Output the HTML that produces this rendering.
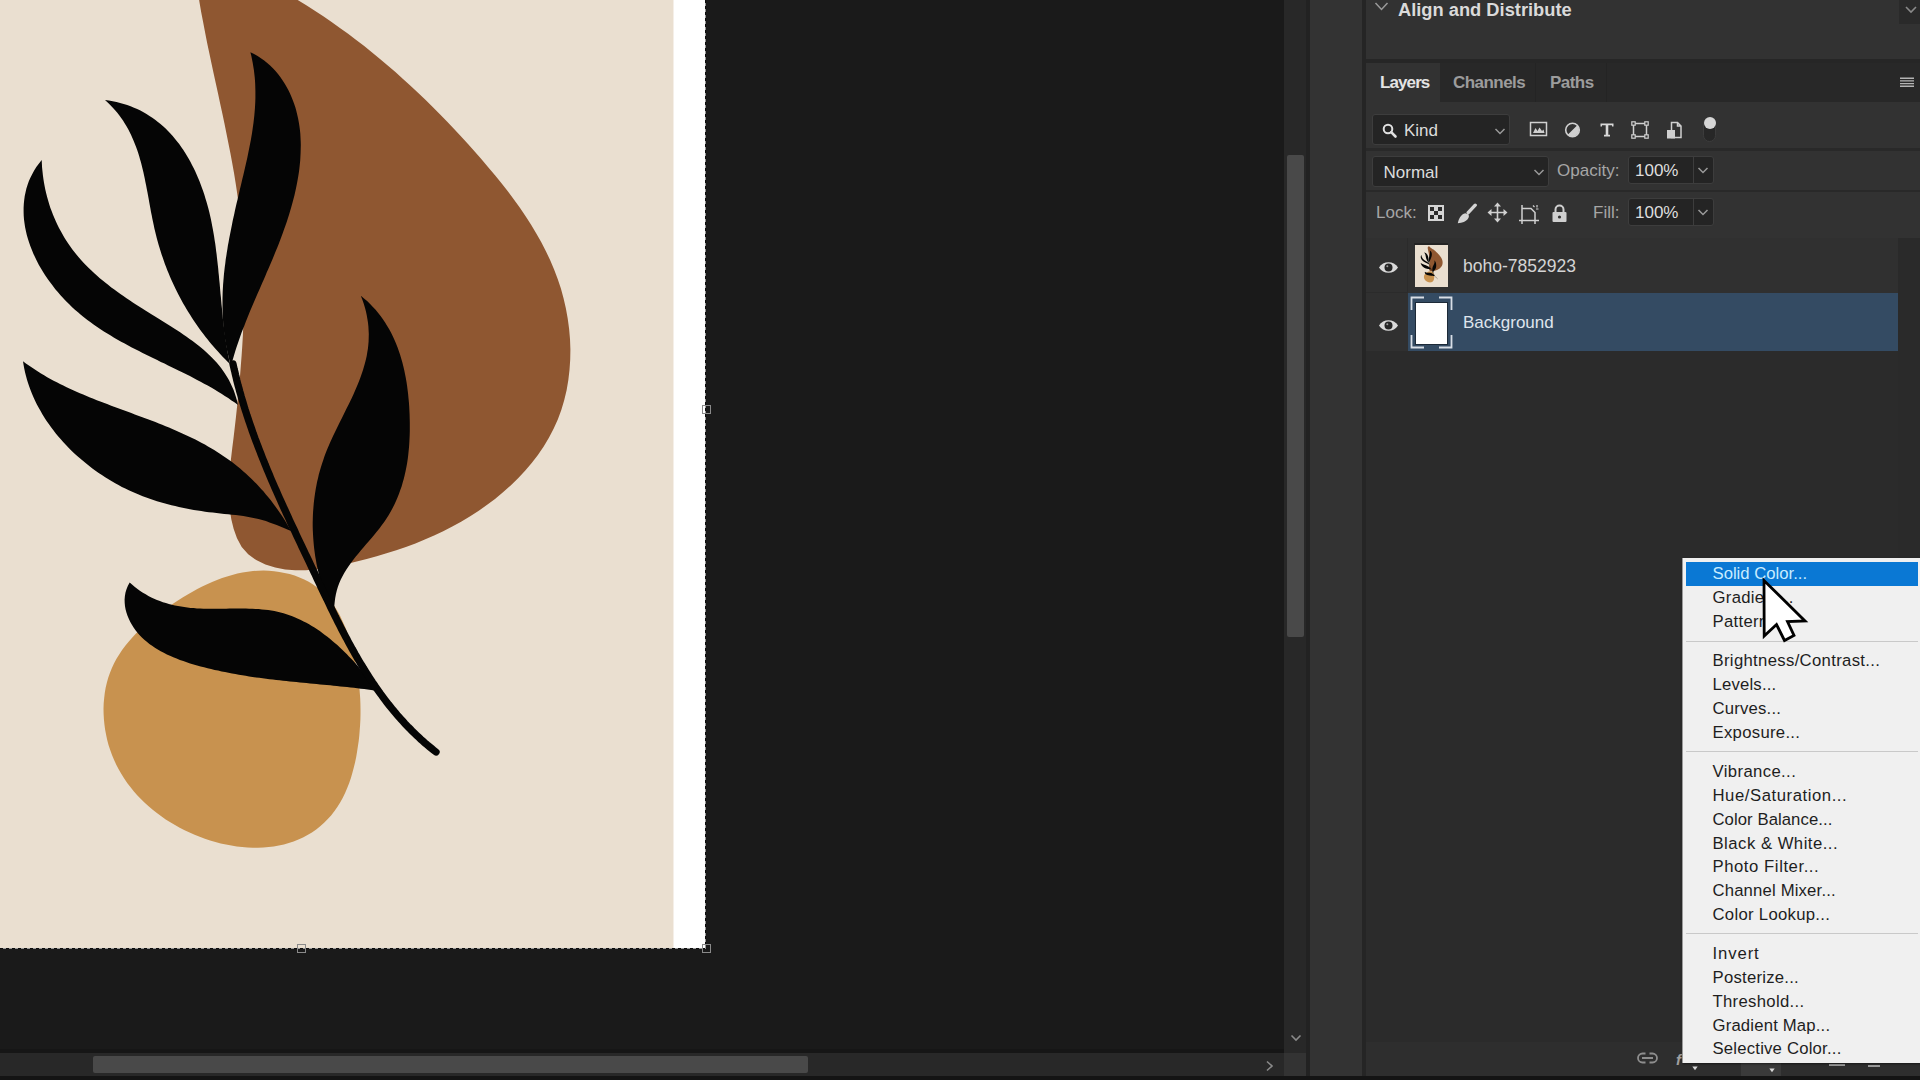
<!DOCTYPE html>
<html>
<head>
<meta charset="utf-8">
<style>
html,body{margin:0;padding:0;}
body{width:1920px;height:1080px;overflow:hidden;background:#1a1a1a;position:relative;font-family:"Liberation Sans",sans-serif;}
.abs{position:absolute;}
.t{position:absolute;white-space:nowrap;line-height:1;}
</style>
</head>
<body>
<!-- canvas area -->
<svg width="706" height="948" viewBox="0 0 706 948" style="position:absolute;left:0;top:0">
<rect x="0" y="0" width="674" height="948" fill="#EADFD0"/>
<rect x="673.5" y="0" width="31.5" height="948" fill="#FFFFFF"/>
<g id="artg"><path d="M297.7,0.1 L306.3,5.3 L314.8,10.8 L323.3,16.3 L331.6,22.0 L339.9,27.9 L348.1,33.8 L356.2,39.9 L364.2,46.1 L372.1,52.5 L380.0,58.9 L387.7,65.5 L395.4,72.1 L403.0,78.9 L410.5,85.8 L418.0,92.7 L425.4,99.8 L432.7,107.0 L439.9,114.3 L447.0,121.6 L454.1,129.0 L461.1,136.5 L468.0,144.1 L474.9,151.8 L481.7,159.5 L488.4,167.4 L495.0,175.3 L501.5,183.2 L507.8,191.3 L513.9,199.5 L519.9,207.8 L525.6,216.2 L531.1,224.8 L536.3,233.4 L541.3,242.2 L545.9,251.2 L550.2,260.3 L554.1,269.6 L557.7,279.0 L560.9,288.6 L563.6,298.4 L565.9,308.4 L567.7,318.5 L569.1,328.7 L570.0,339.0 L570.4,349.4 L570.2,359.7 L569.5,370.0 L568.3,380.2 L566.6,390.3 L564.2,400.3 L561.3,410.0 L557.8,419.6 L553.6,428.8 L548.9,437.8 L543.7,446.5 L537.9,454.9 L531.7,463.0 L525.1,470.8 L518.1,478.3 L510.7,485.4 L503.0,492.3 L495.0,498.9 L486.8,505.1 L478.4,511.0 L469.8,516.5 L461.1,521.7 L452.3,526.6 L443.2,531.2 L434.1,535.5 L424.8,539.6 L415.4,543.4 L405.9,546.9 L396.3,550.2 L386.5,553.3 L376.7,556.2 L366.7,559.0 L356.7,561.5 L346.6,563.9 L336.3,566.1 L326.1,568.0 L315.8,569.4 L305.5,570.2 L295.3,570.2 L285.2,569.4 L275.2,567.5 L265.4,564.5 L256.2,560.1 L248.2,554.3 L241.7,547.0 L237.0,538.3 L233.7,528.9 L231.3,519.2 L229.8,509.4 L229.1,499.5 L228.9,489.4 L229.3,479.3 L230.0,469.1 L231.0,458.8 L232.2,448.6 L233.5,438.2 L234.7,427.9 L235.9,417.6 L237.0,407.3 L238.0,397.0 L239.0,386.7 L240.0,376.3 L240.8,366.0 L241.6,355.8 L242.3,345.5 L242.9,335.2 L243.3,324.9 L243.7,314.7 L244.0,304.5 L244.1,294.3 L244.1,284.1 L243.9,273.9 L243.7,263.8 L243.2,253.6 L242.6,243.5 L241.9,233.5 L241.0,223.4 L239.9,213.4 L238.6,203.4 L237.2,193.5 L235.7,183.5 L234.1,173.5 L232.3,163.6 L230.5,153.7 L228.5,143.7 L226.5,133.8 L224.5,123.8 L222.4,113.8 L220.2,103.8 L218.1,93.8 L215.9,83.7 L213.7,73.7 L211.5,63.5 L209.4,53.4 L207.2,43.2 L205.2,32.9 L203.2,22.6 L201.2,12.2 L199.4,1.8 L198.0,-8.6 L197.9,-18.9 L199.4,-29.0 L203.1,-38.4 L208.6,-46.2 L215.5,-51.3 L223.6,-52.9 L232.2,-51.2 L240.8,-46.7 L248.9,-40.2 L256.6,-32.4 L264.2,-24.3 L272.1,-16.9 L280.4,-10.7 L289.0,-5.2 L297.7,0.1Z" fill="#8F5731"/>
<path d="M173.7,603.3 L178.3,600.3 L183.0,597.3 L187.7,594.5 L192.5,591.7 L197.3,589.1 L202.2,586.6 L207.1,584.2 L212.1,582.0 L217.0,580.0 L222.1,578.1 L227.1,576.4 L232.2,574.9 L237.4,573.6 L242.5,572.5 L247.7,571.7 L253.0,571.1 L258.2,570.7 L263.5,570.6 L268.8,570.8 L274.1,571.2 L279.3,571.9 L284.5,572.9 L289.6,574.1 L294.6,575.6 L299.5,577.4 L304.2,579.5 L308.7,581.8 L313.1,584.5 L317.2,587.4 L321.1,590.6 L324.8,594.1 L328.2,597.9 L331.4,601.9 L334.4,606.1 L337.1,610.5 L339.7,615.1 L342.0,619.9 L344.2,624.8 L346.3,629.8 L348.1,634.9 L349.8,640.1 L351.4,645.4 L352.8,650.6 L354.1,655.9 L355.3,661.2 L356.3,666.5 L357.3,671.8 L358.1,677.0 L358.8,682.3 L359.4,687.7 L359.8,693.0 L360.2,698.3 L360.4,703.6 L360.5,708.9 L360.5,714.2 L360.4,719.6 L360.1,724.9 L359.7,730.2 L359.3,735.6 L358.7,740.9 L357.9,746.3 L357.1,751.6 L356.2,757.0 L355.1,762.3 L353.8,767.6 L352.4,772.8 L350.9,778.0 L349.2,783.1 L347.2,788.1 L345.1,793.0 L342.8,797.7 L340.3,802.3 L337.5,806.8 L334.5,811.1 L331.3,815.2 L327.8,819.1 L324.1,822.8 L320.2,826.2 L316.2,829.4 L311.9,832.4 L307.5,835.1 L303.0,837.5 L298.4,839.6 L293.6,841.5 L288.8,843.1 L283.9,844.5 L278.8,845.6 L273.7,846.5 L268.6,847.1 L263.4,847.6 L258.1,847.8 L252.8,847.8 L247.5,847.5 L242.1,847.1 L236.7,846.5 L231.4,845.6 L226.0,844.6 L220.7,843.4 L215.4,842.0 L210.1,840.4 L204.9,838.7 L199.7,836.8 L194.6,834.8 L189.6,832.6 L184.6,830.2 L179.7,827.7 L175.0,825.1 L170.3,822.3 L165.7,819.4 L161.3,816.3 L156.9,813.1 L152.7,809.8 L148.6,806.3 L144.7,802.7 L140.9,799.0 L137.2,795.2 L133.7,791.2 L130.4,787.1 L127.2,782.9 L124.2,778.6 L121.4,774.1 L118.8,769.6 L116.4,764.9 L114.1,760.1 L112.1,755.2 L110.3,750.2 L108.6,745.2 L107.2,740.0 L106.1,734.8 L105.1,729.6 L104.4,724.3 L103.9,719.0 L103.6,713.7 L103.5,708.4 L103.7,703.1 L104.2,697.9 L104.8,692.7 L105.7,687.6 L106.9,682.5 L108.3,677.5 L110.0,672.7 L111.9,667.9 L114.1,663.3 L116.5,658.8 L119.2,654.4 L122.1,650.1 L125.1,645.9 L128.4,641.9 L131.9,637.9 L135.5,634.0 L139.3,630.3 L143.2,626.6 L147.2,623.0 L151.4,619.5 L155.7,616.1 L160.1,612.8 L164.6,609.5 L169.1,606.4 L173.7,603.3Z" fill="#C8924F"/>
<g fill="#050505">
<path d="M250.4,52.2 L254.1,54.1 L257.6,56.1 L260.9,58.3 L264.2,60.6 L267.2,63.1 L270.1,65.6 L272.9,68.3 L275.5,71.1 L278.0,74.1 L280.3,77.1 L282.5,80.2 L284.6,83.4 L286.5,86.7 L288.3,90.0 L290.0,93.4 L291.5,96.9 L292.9,100.4 L294.2,104.0 L295.4,107.6 L296.4,111.2 L297.3,114.9 L298.1,118.6 L298.8,122.3 L299.4,126.0 L299.9,129.8 L300.3,133.6 L300.5,137.4 L300.7,141.2 L300.8,145.1 L300.7,148.9 L300.6,152.8 L300.4,156.7 L300.2,160.5 L299.8,164.4 L299.4,168.3 L298.9,172.2 L298.3,176.1 L297.6,180.0 L296.9,183.8 L296.1,187.7 L295.3,191.6 L294.4,195.4 L293.4,199.3 L292.4,203.1 L291.3,206.9 L290.2,210.7 L289.1,214.5 L287.9,218.2 L286.7,221.9 L285.4,225.7 L284.1,229.3 L282.8,233.0 L281.5,236.6 L280.1,240.3 L278.7,243.9 L277.3,247.5 L275.8,251.1 L274.4,254.6 L272.9,258.2 L271.4,261.7 L269.9,265.3 L268.4,268.8 L266.8,272.3 L265.3,275.9 L263.8,279.4 L262.2,282.9 L260.7,286.4 L259.2,289.9 L257.6,293.4 L256.1,297.0 L254.6,300.5 L253.1,304.0 L251.6,307.6 L250.1,311.1 L248.6,314.7 L247.2,318.2 L245.8,321.8 L244.4,325.4 L243.0,329.0 L241.6,332.6 L240.3,336.2 L239.0,339.9 L237.8,343.5 L236.5,347.2 L235.3,350.9 L234.2,354.7 L233.1,358.4 L232.0,362.2 L231.0,366.0 L230.0,362.4 L229.0,358.9 L228.2,355.3 L227.4,351.8 L226.6,348.2 L226.0,344.7 L225.4,341.1 L224.8,337.6 L224.3,334.0 L223.9,330.5 L223.5,327.0 L223.2,323.4 L223.0,319.9 L222.8,316.3 L222.6,312.8 L222.5,309.2 L222.5,305.7 L222.5,302.1 L222.5,298.6 L222.6,295.0 L222.7,291.5 L222.9,288.0 L223.1,284.4 L223.4,280.9 L223.7,277.3 L224.0,273.8 L224.4,270.3 L224.8,266.7 L225.3,263.2 L225.7,259.6 L226.3,256.1 L226.8,252.6 L227.4,249.0 L227.9,245.5 L228.6,242.0 L229.2,238.5 L229.9,234.9 L230.6,231.4 L231.3,227.9 L232.0,224.4 L232.7,220.8 L233.5,217.3 L234.3,213.8 L235.0,210.3 L235.8,206.8 L236.6,203.3 L237.5,199.7 L238.3,196.2 L239.1,192.7 L239.9,189.2 L240.8,185.7 L241.6,182.2 L242.4,178.7 L243.3,175.2 L244.1,171.7 L244.9,168.2 L245.7,164.7 L246.5,161.2 L247.3,157.7 L248.0,154.2 L248.7,150.7 L249.4,147.2 L250.1,143.7 L250.8,140.2 L251.4,136.7 L252.0,133.2 L252.5,129.7 L253.0,126.2 L253.5,122.7 L253.9,119.2 L254.3,115.7 L254.6,112.2 L254.9,108.7 L255.1,105.2 L255.3,101.6 L255.4,98.1 L255.4,94.6 L255.4,91.1 L255.3,87.6 L255.2,84.1 L255.0,80.5 L254.7,77.0 L254.3,73.5 L253.9,69.9 L253.3,66.4 L252.7,62.8 L252.0,59.3 L251.3,55.8 L250.4,52.2Z"/>
<path d="M105.0,100.0 L108.9,100.6 L112.7,101.2 L116.5,102.0 L120.1,102.9 L123.7,103.9 L127.2,105.1 L130.6,106.3 L134.0,107.7 L137.2,109.1 L140.4,110.6 L143.5,112.3 L146.5,114.0 L149.5,115.9 L152.3,117.8 L155.1,119.8 L157.9,121.9 L160.5,124.1 L163.1,126.3 L165.6,128.6 L168.0,131.1 L170.4,133.5 L172.7,136.1 L174.9,138.7 L177.1,141.4 L179.2,144.1 L181.2,146.9 L183.2,149.8 L185.1,152.7 L186.9,155.7 L188.7,158.7 L190.4,161.8 L192.0,164.9 L193.6,168.1 L195.2,171.2 L196.6,174.5 L198.0,177.8 L199.4,181.1 L200.7,184.4 L201.9,187.7 L203.1,191.1 L204.3,194.5 L205.3,198.0 L206.4,201.4 L207.4,204.9 L208.3,208.3 L209.2,211.8 L210.0,215.3 L210.8,218.8 L211.5,222.3 L212.2,225.9 L212.9,229.4 L213.5,232.9 L214.1,236.5 L214.6,240.0 L215.2,243.6 L215.7,247.2 L216.1,250.7 L216.6,254.3 L217.0,257.9 L217.4,261.5 L217.8,265.0 L218.2,268.6 L218.5,272.2 L218.9,275.8 L219.2,279.4 L219.6,283.0 L219.9,286.6 L220.2,290.2 L220.5,293.7 L220.9,297.3 L221.2,300.9 L221.5,304.5 L221.9,308.0 L222.2,311.6 L222.6,315.1 L222.9,318.7 L223.3,322.2 L223.7,325.8 L224.2,329.3 L224.6,332.8 L225.1,336.3 L225.6,339.8 L226.1,343.3 L226.7,346.8 L227.3,350.3 L227.9,353.7 L228.6,357.2 L229.3,360.6 L230.0,364.0 L227.6,361.7 L225.2,359.3 L222.9,356.9 L220.6,354.5 L218.4,352.0 L216.1,349.5 L213.9,347.0 L211.7,344.5 L209.6,341.9 L207.5,339.3 L205.4,336.7 L203.4,334.0 L201.4,331.4 L199.4,328.7 L197.5,326.0 L195.6,323.2 L193.7,320.4 L191.9,317.7 L190.1,314.8 L188.3,312.0 L186.6,309.2 L184.9,306.3 L183.2,303.4 L181.6,300.5 L180.0,297.5 L178.4,294.6 L176.9,291.6 L175.4,288.6 L174.0,285.6 L172.6,282.5 L171.2,279.5 L169.9,276.4 L168.6,273.3 L167.3,270.2 L166.1,267.1 L164.9,263.9 L163.8,260.8 L162.7,257.6 L161.6,254.4 L160.6,251.2 L159.6,248.0 L158.6,244.8 L157.7,241.5 L156.8,238.3 L156.0,235.0 L155.2,231.7 L154.4,228.4 L153.7,225.1 L153.0,221.8 L152.3,218.5 L151.7,215.2 L151.0,211.9 L150.4,208.5 L149.8,205.2 L149.2,201.9 L148.6,198.6 L148.0,195.3 L147.4,191.9 L146.7,188.6 L146.1,185.3 L145.4,182.0 L144.8,178.8 L144.1,175.5 L143.4,172.3 L142.6,169.0 L141.8,165.8 L141.0,162.6 L140.1,159.4 L139.2,156.3 L138.2,153.1 L137.2,150.0 L136.1,146.9 L134.9,143.9 L133.7,140.9 L132.4,137.9 L131.1,134.9 L129.6,132.0 L128.1,129.1 L126.5,126.2 L124.8,123.4 L123.0,120.6 L121.2,117.9 L119.2,115.2 L117.1,112.5 L114.9,109.9 L112.6,107.4 L110.2,104.9 L107.7,102.4 L105.0,100.0Z"/>
<path d="M41.7,160.0 L41.9,163.9 L42.1,167.7 L42.5,171.5 L42.9,175.3 L43.4,179.0 L44.0,182.7 L44.7,186.4 L45.4,190.1 L46.3,193.7 L47.2,197.3 L48.2,200.8 L49.3,204.4 L50.4,207.9 L51.7,211.3 L53.0,214.7 L54.4,218.1 L55.9,221.4 L57.4,224.7 L59.0,227.9 L60.7,231.1 L62.5,234.3 L64.3,237.4 L66.2,240.5 L68.2,243.5 L70.3,246.4 L72.4,249.4 L74.6,252.2 L76.8,255.0 L79.1,257.8 L81.5,260.5 L84.0,263.2 L86.5,265.8 L89.0,268.3 L91.7,270.8 L94.3,273.3 L97.1,275.8 L99.8,278.2 L102.7,280.5 L105.5,282.8 L108.4,285.1 L111.3,287.4 L114.3,289.6 L117.3,291.8 L120.4,294.0 L123.4,296.1 L126.5,298.2 L129.6,300.3 L132.8,302.4 L135.9,304.5 L139.1,306.5 L142.3,308.6 L145.4,310.6 L148.6,312.6 L151.8,314.6 L155.1,316.6 L158.3,318.6 L161.5,320.6 L164.7,322.5 L167.9,324.5 L171.1,326.5 L174.2,328.5 L177.4,330.6 L180.5,332.6 L183.6,334.7 L186.6,336.8 L189.6,338.9 L192.6,341.0 L195.5,343.2 L198.4,345.5 L201.2,347.8 L203.9,350.1 L206.6,352.5 L209.2,354.9 L211.8,357.4 L214.2,360.0 L216.6,362.6 L218.9,365.3 L221.1,368.1 L223.2,371.0 L225.2,374.0 L227.1,377.0 L228.9,380.1 L230.6,383.4 L232.1,386.7 L233.6,390.1 L234.9,393.7 L236.0,397.3 L237.1,401.1 L238.0,405.0 L234.8,402.6 L231.5,400.4 L228.2,398.1 L224.8,395.9 L221.5,393.8 L218.1,391.7 L214.6,389.6 L211.2,387.6 L207.7,385.6 L204.1,383.7 L200.6,381.7 L197.1,379.9 L193.5,378.0 L189.9,376.1 L186.3,374.3 L182.7,372.5 L179.0,370.7 L175.4,368.9 L171.8,367.2 L168.1,365.4 L164.5,363.6 L160.8,361.9 L157.2,360.1 L153.5,358.3 L149.9,356.5 L146.2,354.8 L142.6,352.9 L139.0,351.1 L135.4,349.3 L131.8,347.4 L128.2,345.5 L124.7,343.6 L121.1,341.7 L117.6,339.7 L114.1,337.7 L110.7,335.6 L107.3,333.5 L103.9,331.4 L100.5,329.2 L97.2,327.0 L93.9,324.7 L90.6,322.3 L87.4,319.9 L84.2,317.5 L81.1,314.9 L78.0,312.3 L74.9,309.7 L71.9,306.9 L69.0,304.1 L66.1,301.2 L63.3,298.3 L60.5,295.2 L57.8,292.1 L55.1,288.9 L52.6,285.6 L50.1,282.3 L47.7,278.9 L45.3,275.5 L43.1,272.0 L41.0,268.5 L38.9,264.9 L37.0,261.2 L35.2,257.6 L33.5,253.9 L31.9,250.1 L30.4,246.3 L29.1,242.5 L27.9,238.7 L26.8,234.9 L25.9,231.0 L25.1,227.2 L24.5,223.3 L24.0,219.4 L23.7,215.5 L23.6,211.6 L23.6,207.8 L23.8,203.9 L24.2,200.0 L24.7,196.2 L25.5,192.4 L26.4,188.6 L27.6,184.8 L28.9,181.1 L30.5,177.5 L32.3,173.9 L34.3,170.3 L36.5,166.8 L39.0,163.4 L41.7,160.0Z"/>
<path d="M23.0,361.3 L25.9,363.5 L28.9,365.6 L31.9,367.6 L34.9,369.6 L37.9,371.6 L41.0,373.5 L44.1,375.3 L47.2,377.2 L50.4,378.9 L53.6,380.7 L56.8,382.3 L60.0,384.0 L63.3,385.6 L66.6,387.2 L69.9,388.7 L73.2,390.3 L76.5,391.7 L79.9,393.2 L83.2,394.6 L86.6,396.1 L90.0,397.4 L93.4,398.8 L96.8,400.2 L100.3,401.5 L103.7,402.8 L107.1,404.1 L110.6,405.4 L114.0,406.7 L117.5,408.0 L120.9,409.3 L124.4,410.6 L127.9,411.8 L131.3,413.1 L134.8,414.4 L138.2,415.7 L141.7,416.9 L145.1,418.2 L148.6,419.5 L152.0,420.8 L155.4,422.1 L158.8,423.5 L162.2,424.8 L165.6,426.2 L169.0,427.6 L172.3,429.0 L175.7,430.4 L179.0,431.9 L182.3,433.4 L185.6,434.9 L188.9,436.4 L192.1,438.0 L195.4,439.6 L198.6,441.2 L201.8,442.9 L204.9,444.6 L208.0,446.4 L211.1,448.2 L214.2,450.0 L217.2,451.9 L220.3,453.9 L223.2,455.9 L226.2,457.9 L229.1,460.0 L232.0,462.1 L234.8,464.3 L237.6,466.6 L240.4,468.8 L243.1,471.2 L245.8,473.6 L248.4,476.0 L251.1,478.5 L253.6,481.0 L256.2,483.6 L258.7,486.2 L261.1,488.9 L263.6,491.6 L265.9,494.4 L268.3,497.2 L270.6,500.0 L272.8,502.9 L275.0,505.9 L277.2,508.9 L279.3,511.9 L281.4,515.0 L283.4,518.1 L285.4,521.3 L287.3,524.5 L289.2,527.7 L291.0,531.0 L287.4,529.5 L283.9,528.0 L280.3,526.5 L276.7,525.1 L273.1,523.7 L269.5,522.4 L265.9,521.1 L262.2,520.0 L258.5,519.0 L254.8,518.2 L251.0,517.4 L247.2,516.7 L243.4,516.1 L239.6,515.6 L235.8,515.1 L232.0,514.7 L228.1,514.3 L224.3,513.9 L220.4,513.5 L216.6,513.1 L212.8,512.6 L208.9,512.2 L205.1,511.7 L201.3,511.1 L197.6,510.5 L193.8,509.9 L190.0,509.2 L186.3,508.5 L182.6,507.8 L178.9,507.0 L175.2,506.1 L171.5,505.2 L167.9,504.3 L164.2,503.3 L160.6,502.3 L157.0,501.2 L153.4,500.0 L149.8,498.8 L146.3,497.5 L142.7,496.2 L139.2,494.8 L135.7,493.3 L132.2,491.8 L128.8,490.2 L125.3,488.6 L121.9,486.9 L118.5,485.1 L115.2,483.2 L111.8,481.3 L108.5,479.3 L105.2,477.3 L101.9,475.1 L98.7,473.0 L95.5,470.7 L92.4,468.4 L89.3,466.0 L86.2,463.6 L83.2,461.1 L80.2,458.6 L77.2,456.0 L74.4,453.4 L71.5,450.7 L68.8,447.9 L66.0,445.1 L63.4,442.2 L60.8,439.3 L58.3,436.4 L55.8,433.4 L53.4,430.3 L51.1,427.2 L48.8,424.1 L46.6,420.9 L44.5,417.7 L42.5,414.4 L40.6,411.1 L38.7,407.8 L36.9,404.4 L35.2,401.0 L33.6,397.5 L32.1,394.1 L30.7,390.5 L29.4,387.0 L28.2,383.4 L27.0,379.8 L26.0,376.1 L25.1,372.5 L24.3,368.8 L23.6,365.1 L23.0,361.3Z"/>
<path d="M360.8,295.7 L364.0,298.4 L367.1,301.1 L370.1,303.9 L372.9,306.9 L375.6,309.8 L378.2,312.9 L380.6,316.1 L382.9,319.3 L385.1,322.5 L387.2,325.9 L389.2,329.3 L391.1,332.8 L392.8,336.3 L394.5,339.9 L396.0,343.5 L397.5,347.2 L398.8,350.9 L400.1,354.7 L401.2,358.5 L402.3,362.3 L403.3,366.2 L404.2,370.1 L405.0,374.1 L405.8,378.0 L406.5,382.0 L407.1,386.0 L407.6,390.1 L408.1,394.1 L408.5,398.2 L408.9,402.3 L409.2,406.4 L409.4,410.5 L409.6,414.6 L409.7,418.7 L409.8,422.8 L409.8,426.8 L409.8,430.9 L409.7,435.0 L409.5,439.1 L409.3,443.1 L409.0,447.2 L408.6,451.2 L408.2,455.2 L407.7,459.2 L407.1,463.2 L406.4,467.1 L405.6,471.0 L404.7,474.9 L403.8,478.8 L402.7,482.6 L401.6,486.4 L400.3,490.1 L399.0,493.8 L397.5,497.5 L396.0,501.1 L394.3,504.7 L392.5,508.2 L390.6,511.7 L388.6,515.2 L386.5,518.5 L384.2,521.9 L381.9,525.1 L379.4,528.4 L376.9,531.6 L374.3,534.7 L371.6,537.9 L369.0,541.0 L366.3,544.1 L363.6,547.2 L361.0,550.3 L358.4,553.4 L355.8,556.6 L353.3,559.8 L350.9,562.9 L348.6,566.2 L346.4,569.5 L344.4,572.8 L342.5,576.2 L340.8,579.6 L339.3,583.1 L337.9,586.7 L336.8,590.4 L335.9,594.2 L335.2,598.0 L334.7,601.9 L334.3,605.9 L334.1,609.9 L334.0,613.9 L334.0,618.0 L332.4,614.5 L330.9,611.0 L329.4,607.4 L328.0,603.9 L326.7,600.3 L325.4,596.7 L324.1,593.1 L323.0,589.5 L321.9,585.8 L320.8,582.2 L319.8,578.5 L318.9,574.8 L318.1,571.1 L317.3,567.4 L316.5,563.7 L315.9,560.0 L315.2,556.3 L314.7,552.6 L314.2,548.8 L313.8,545.1 L313.5,541.4 L313.2,537.6 L313.0,533.9 L312.8,530.1 L312.7,526.4 L312.7,522.6 L312.8,518.9 L312.9,515.2 L313.1,511.4 L313.4,507.7 L313.7,504.0 L314.1,500.3 L314.6,496.6 L315.1,492.9 L315.7,489.2 L316.4,485.5 L317.1,481.8 L318.0,478.2 L318.8,474.6 L319.8,470.9 L320.9,467.3 L322.0,463.7 L323.2,460.2 L324.4,456.6 L325.7,453.1 L327.1,449.5 L328.6,446.0 L330.1,442.6 L331.7,439.1 L333.3,435.6 L334.9,432.2 L336.6,428.7 L338.3,425.3 L340.0,421.8 L341.7,418.4 L343.4,415.0 L345.1,411.6 L346.8,408.1 L348.5,404.7 L350.2,401.3 L351.8,397.9 L353.4,394.4 L354.9,391.0 L356.4,387.5 L357.9,384.1 L359.3,380.6 L360.6,377.1 L361.8,373.6 L363.0,370.1 L364.0,366.6 L365.0,363.1 L365.9,359.5 L366.7,355.9 L367.3,352.3 L367.9,348.7 L368.3,345.0 L368.6,341.4 L368.7,337.7 L368.8,334.0 L368.6,330.2 L368.4,326.5 L368.0,322.7 L367.4,318.9 L366.7,315.1 L365.9,311.2 L364.9,307.4 L363.7,303.5 L362.3,299.6 L360.8,295.7Z"/>
<path d="M129.7,582.4 L132.3,584.7 L134.9,586.9 L137.5,588.9 L140.2,590.9 L142.9,592.7 L145.7,594.3 L148.4,595.9 L151.3,597.4 L154.1,598.7 L157.0,600.0 L159.9,601.1 L162.9,602.2 L165.9,603.1 L168.9,604.0 L171.9,604.8 L174.9,605.5 L178.0,606.1 L181.1,606.6 L184.2,607.1 L187.4,607.5 L190.5,607.9 L193.7,608.1 L196.9,608.4 L200.1,608.5 L203.4,608.7 L206.6,608.7 L209.9,608.8 L213.1,608.8 L216.4,608.8 L219.7,608.8 L223.0,608.7 L226.2,608.7 L229.5,608.6 L232.8,608.6 L236.1,608.6 L239.4,608.5 L242.6,608.6 L245.9,608.6 L249.1,608.7 L252.3,608.8 L255.5,608.9 L258.7,609.1 L261.9,609.4 L265.1,609.7 L268.2,610.1 L271.3,610.6 L274.4,611.1 L277.5,611.7 L280.5,612.5 L283.5,613.3 L286.5,614.2 L289.4,615.2 L292.3,616.3 L295.2,617.4 L298.0,618.7 L300.8,620.0 L303.6,621.4 L306.4,622.8 L309.1,624.3 L311.8,625.9 L314.5,627.6 L317.1,629.3 L319.8,631.1 L322.3,633.0 L324.9,634.9 L327.4,636.8 L329.9,638.8 L332.4,640.9 L334.8,643.0 L337.3,645.1 L339.6,647.3 L342.0,649.5 L344.3,651.8 L346.7,654.1 L348.9,656.4 L351.2,658.8 L353.4,661.1 L355.6,663.5 L357.8,666.0 L359.9,668.4 L362.0,670.9 L364.1,673.4 L366.2,675.9 L368.2,678.4 L370.2,680.9 L372.2,683.4 L374.2,685.9 L376.1,688.5 L378.0,691.0 L374.5,690.5 L371.1,690.0 L367.6,689.5 L364.2,689.1 L360.8,688.7 L357.3,688.2 L353.9,687.8 L350.5,687.5 L347.1,687.1 L343.7,686.7 L340.3,686.4 L336.9,686.0 L333.5,685.7 L330.2,685.3 L326.8,685.0 L323.4,684.7 L320.0,684.4 L316.7,684.0 L313.3,683.7 L309.9,683.4 L306.6,683.1 L303.2,682.8 L299.8,682.4 L296.5,682.1 L293.1,681.8 L289.7,681.4 L286.4,681.1 L283.0,680.7 L279.6,680.3 L276.2,680.0 L272.9,679.6 L269.5,679.2 L266.1,678.7 L262.7,678.3 L259.3,677.8 L255.9,677.4 L252.5,676.9 L249.1,676.4 L245.7,675.8 L242.3,675.3 L238.8,674.7 L235.4,674.1 L232.0,673.5 L228.5,672.8 L225.0,672.1 L221.6,671.4 L218.1,670.6 L214.6,669.9 L211.1,669.1 L207.6,668.2 L204.1,667.3 L200.6,666.4 L197.1,665.4 L193.6,664.4 L190.1,663.4 L186.7,662.3 L183.3,661.1 L179.9,659.9 L176.6,658.6 L173.3,657.2 L170.0,655.8 L166.9,654.4 L163.8,652.8 L160.7,651.2 L157.8,649.5 L154.9,647.7 L152.1,645.8 L149.4,643.9 L146.8,641.8 L144.3,639.7 L141.9,637.5 L139.7,635.2 L137.5,632.7 L135.5,630.2 L133.6,627.6 L131.9,624.8 L130.3,622.0 L128.9,619.0 L127.6,615.9 L126.5,612.8 L125.6,609.5 L125.0,606.2 L124.7,602.9 L124.6,599.5 L124.9,596.1 L125.5,592.6 L126.5,589.2 L127.9,585.8 L129.7,582.4Z"/>
</g>
<path d="M233.0,364.0 L233.6,366.7 L234.2,369.5 L234.9,372.2 L235.5,374.9 L236.2,377.7 L236.8,380.4 L237.5,383.1 L238.2,385.8 L239.0,388.5 L239.7,391.2 L240.5,393.9 L241.2,396.5 L242.0,399.2 L242.8,401.9 L243.6,404.6 L244.4,407.2 L245.2,409.9 L246.1,412.5 L246.9,415.2 L247.8,417.8 L248.7,420.5 L249.6,423.1 L250.5,425.7 L251.4,428.3 L252.3,431.0 L253.2,433.6 L254.2,436.2 L255.1,438.8 L256.1,441.4 L257.1,444.0 L258.1,446.6 L259.1,449.2 L260.1,451.8 L261.1,454.4 L262.1,457.0 L263.1,459.5 L264.2,462.1 L265.2,464.7 L266.3,467.3 L267.3,469.8 L268.4,472.4 L269.5,475.0 L270.5,477.5 L271.6,480.1 L272.7,482.6 L273.8,485.2 L274.9,487.8 L276.1,490.3 L277.2,492.9 L278.3,495.4 L279.4,497.9 L280.6,500.5 L281.7,503.0 L282.9,505.6 L284.0,508.1 L285.2,510.6 L286.3,513.2 L287.5,515.7 L288.7,518.2 L289.8,520.8 L291.0,523.3 L292.2,525.8 L293.4,528.4 L294.6,530.9 L295.7,533.4 L296.9,536.0 L298.1,538.5 L299.3,541.0 L300.5,543.5 L301.7,546.1 L302.9,548.6 L304.1,551.1 L305.3,553.7 L306.5,556.2 L307.7,558.7 L308.9,561.2 L310.1,563.8 L311.3,566.3 L312.5,568.8 L313.7,571.4 L314.9,573.9 L316.0,576.4 L317.2,579.0 L318.4,581.5 L319.6,584.0 L320.8,586.6 L322.0,589.1 L323.2,591.6 L324.4,594.2 L325.6,596.7 L326.9,599.2 L328.1,601.7 L329.3,604.3 L330.5,606.8 L331.7,609.3 L333.0,611.8 L334.2,614.3 L335.4,616.8 L336.7,619.3 L337.9,621.8 L339.2,624.3 L340.5,626.8 L341.7,629.3 L343.0,631.8 L344.3,634.2 L345.6,636.7 L346.9,639.1 L348.2,641.6 L349.5,644.0 L350.9,646.5 L352.2,648.9 L353.6,651.3 L354.9,653.8 L356.3,656.2 L357.7,658.6 L359.1,661.0 L360.5,663.3 L362.0,665.7 L363.4,668.1 L364.9,670.4 L366.3,672.8 L367.8,675.1 L369.3,677.4 L370.8,679.7 L372.3,682.0 L373.9,684.3 L375.4,686.6 L377.0,688.9 L378.6,691.1 L380.2,693.4 L381.9,695.6 L383.5,697.8 L385.2,700.1 L386.8,702.2 L388.5,704.4 L390.3,706.6 L392.0,708.7 L393.8,710.9 L395.5,713.0 L397.3,715.1 L399.2,717.2 L401.0,719.3 L402.9,721.3 L404.8,723.4 L406.7,725.4 L408.6,727.4 L410.6,729.4 L412.5,731.4 L414.6,733.4 L416.6,735.3 L418.6,737.2 L420.7,739.2 L422.8,741.0 L424.9,742.9 L427.1,744.8 L429.3,746.6 L431.5,748.4 L433.7,750.2 L436.0,752.0" fill="none" stroke="#050505" stroke-width="7.3" stroke-linecap="round"/></g>
</svg>
<!-- selection dashed borders -->
<div class="abs" style="left:705px;top:0;width:1px;height:949px;background:repeating-linear-gradient(180deg,#000 0 3px,#fff 3px 6px);opacity:.55"></div>
<div class="abs" style="left:0;top:948px;width:706px;height:1px;background:repeating-linear-gradient(90deg,#000 0 3px,#fff 3px 6px);opacity:.55"></div>
<!-- handles -->
<div class="abs" style="left:702px;top:405px;width:9px;height:9px;border:1px solid #8a8a8a;box-sizing:border-box;"></div>
<div class="abs" style="left:297px;top:944px;width:9px;height:9px;border:1px solid #8a8a8a;box-sizing:border-box;"></div>
<div class="abs" style="left:702px;top:944px;width:9px;height:9px;border:1px solid #8a8a8a;box-sizing:border-box;"></div>

<!-- vertical scrollbar -->
<div class="abs" style="left:1284px;top:0;width:22px;height:1053px;background:#282828"></div>
<div class="abs" style="left:1287px;top:155px;width:17px;height:482px;background:#494949;border-radius:2px"></div>
<svg class="abs" style="left:1290px;top:1034px" width="12" height="8" viewBox="0 0 12 8"><path d="M1.5,1.5 L6,6 L10.5,1.5" fill="none" stroke="#8a8a8a" stroke-width="1.6"/></svg>
<!-- horizontal scrollbar -->
<div class="abs" style="left:0;top:1049px;width:1284px;height:4px;background:#161616"></div>
<div class="abs" style="left:0;top:1053px;width:1284px;height:23px;background:#282828"></div>
<div class="abs" style="left:93px;top:1056px;width:715px;height:17px;background:#494949;border-radius:2px"></div>
<svg class="abs" style="left:1265px;top:1060px" width="10" height="12" viewBox="0 0 10 12"><path d="M2,1.5 L7,6 L2,10.5" fill="none" stroke="#8a8a8a" stroke-width="1.6"/></svg>
<div class="abs" style="left:1284px;top:1053px;width:22px;height:23px;background:#333"></div>
<div class="abs" style="left:0;top:1076px;width:1920px;height:4px;background:#141414"></div>

<!-- separators & middle column -->
<div class="abs" style="left:1306px;top:0;width:4px;height:1076px;background:#222"></div>
<div class="abs" style="left:1310px;top:0;width:52px;height:1076px;background:#333"></div>
<div class="abs" style="left:1362px;top:0;width:4px;height:1076px;background:#252525"></div>

<!-- right panel -->
<div class="abs" style="left:1366px;top:0;width:554px;height:1076px;background:#2b2b2b"></div>
<!-- align section -->
<div class="abs" style="left:1366px;top:0;width:554px;height:59px;background:#323232"></div>
<svg class="abs" style="left:1374px;top:1px" width="16" height="11" viewBox="0 0 16 11"><path d="M1.5,2 L7.5,8.5 L13.5,2" fill="none" stroke="#9a9a9a" stroke-width="1.5"/></svg>
<div class="t" style="left:1398px;top:0.5px;font-size:18.3px;font-weight:bold;color:#dadada;">Align and Distribute</div>
<div class="abs" style="left:1899px;top:0;width:21px;height:24px;background:#2a2a2a"></div>
<svg class="abs" style="left:1904px;top:5px" width="14" height="10" viewBox="0 0 14 10"><path d="M2,2 L7,7 L12,2" fill="none" stroke="#8a8a8a" stroke-width="1.6"/></svg>
<div class="abs" style="left:1366px;top:59px;width:554px;height:4px;background:#262626"></div>
<!-- tab bar -->
<div class="abs" style="left:1366px;top:63px;width:554px;height:39px;background:#282828"></div>
<div class="abs" style="left:1366px;top:63px;width:74px;height:39px;background:#323232"></div>
<div class="abs" style="left:1535px;top:63px;width:1px;height:39px;background:#242424"></div>
<div class="abs" style="left:1606px;top:63px;width:1px;height:39px;background:#242424"></div>
<div class="t" style="left:1380px;top:74px;font-size:17px;font-weight:bold;letter-spacing:-0.9px;color:#e4e4e4;">Layers</div>
<div class="t" style="left:1453px;top:74px;font-size:17px;font-weight:bold;letter-spacing:-0.55px;color:#9c9c9c;">Channels</div>
<div class="t" style="left:1550px;top:74px;font-size:17px;font-weight:bold;letter-spacing:-0.55px;color:#9c9c9c;">Paths</div>
<svg class="abs" style="left:1899px;top:76px" width="16" height="12" viewBox="0 0 16 12"><path d="M1,2.2 H15 M1,4.9 H15 M1,7.6 H15 M1,10.3 H15" stroke="#b4b4b4" stroke-width="1.4"/></svg>

<!-- filter row -->
<div class="abs" style="left:1366px;top:102px;width:554px;height:136px;background:#323232"></div>
<div class="abs" style="left:1372px;top:114px;width:138px;height:31px;background:#242424;border:1px solid #3d3d3d;border-radius:3px;box-sizing:border-box"></div>
<svg class="abs" style="left:1382px;top:123px" width="16" height="16" viewBox="0 0 16 16"><circle cx="6" cy="6" r="4.3" fill="none" stroke="#e0e0e0" stroke-width="2"/><path d="M9.2,9.2 L13.5,13.5" stroke="#e0e0e0" stroke-width="2.6" stroke-linecap="round"/></svg>
<div class="t" style="left:1404px;top:121.5px;font-size:17px;color:#dcdcdc;">Kind</div>
<svg class="abs" style="left:1494px;top:127px" width="12" height="9" viewBox="0 0 12 9"><path d="M1.5,2 L6,6.5 L10.5,2" fill="none" stroke="#9a9a9a" stroke-width="1.5"/></svg>
<!-- filter icons -->
<svg class="abs" style="left:1529px;top:121px" width="20" height="17" viewBox="0 0 20 17"><rect x="1.5" y="1.5" width="16" height="13" fill="none" stroke="#d0d0d0" stroke-width="1.5"/><path d="M4,12 L6.5,7 L8.5,10 L10.5,6.5 L13,10 L14.5,8.5 L15.5,12Z" fill="#d0d0d0"/></svg>
<svg class="abs" style="left:1564px;top:121px" width="18" height="18" viewBox="0 0 18 18"><circle cx="8.5" cy="9" r="6.8" fill="none" stroke="#d0d0d0" stroke-width="1.6"/><path d="M13.3,4.2 A6.8,6.8 0 0 1 3.7,13.8 Z" fill="#d0d0d0"/></svg>
<svg class="abs" style="left:1599px;top:122px" width="17" height="16" viewBox="0 0 17 16"><path d="M1.5,1.5 H14.5 V4.5 H13 V3.3 H9.3 V12.8 H11 V14.5 H5 V12.8 H6.7 V3.3 H3 V4.5 H1.5Z" fill="#d8d8d8"/></svg>
<svg class="abs" style="left:1631px;top:121px" width="18" height="18" viewBox="0 0 18 18"><rect x="2.5" y="2.5" width="13" height="13" fill="none" stroke="#d0d0d0" stroke-width="1.5"/><rect x="0.8" y="0.8" width="3.4" height="3.4" fill="#323232" stroke="#d0d0d0" stroke-width="1.2"/><rect x="13.8" y="0.8" width="3.4" height="3.4" fill="#323232" stroke="#d0d0d0" stroke-width="1.2"/><rect x="0.8" y="13.8" width="3.4" height="3.4" fill="#323232" stroke="#d0d0d0" stroke-width="1.2"/><rect x="13.8" y="13.8" width="3.4" height="3.4" fill="#323232" stroke="#d0d0d0" stroke-width="1.2"/></svg>
<svg class="abs" style="left:1666px;top:121px" width="17" height="19" viewBox="0 0 17 19"><path d="M5.5,1.5 H11.5 L15,5 V16.5 H5.5Z M11.5,1.5 V5 H15" fill="none" stroke="#d0d0d0" stroke-width="1.5"/><rect x="1" y="9" width="8" height="8.5" fill="#d0d0d0"/></svg>
<div class="abs" style="left:1703px;top:117px;width:13px;height:25px;border-radius:7px;background:#272727;border:1px solid #3c3c3c;box-sizing:border-box"></div>
<div class="abs" style="left:1703.5px;top:116.5px;width:12px;height:12px;border-radius:50%;background:#d6d6d6"></div>
<div class="abs" style="left:1366px;top:148px;width:554px;height:3px;background:#292929"></div>
<!-- blend row -->
<div class="abs" style="left:1372px;top:156px;width:177px;height:31px;background:#242424;border:1px solid #3d3d3d;border-radius:3px;box-sizing:border-box"></div>
<div class="t" style="left:1383.5px;top:163.5px;font-size:17px;color:#dcdcdc;">Normal</div>
<svg class="abs" style="left:1533px;top:168px" width="12" height="9" viewBox="0 0 12 9"><path d="M1.5,2 L6,6.5 L10.5,2" fill="none" stroke="#9a9a9a" stroke-width="1.5"/></svg>
<div class="t" style="left:1557px;top:162px;font-size:17px;color:#a6a6a6;">Opacity:</div>
<div class="abs" style="left:1628px;top:156px;width:86px;height:28px;background:#242424;border:1px solid #3d3d3d;border-radius:3px;box-sizing:border-box"></div>
<div class="abs" style="left:1693px;top:157px;width:1px;height:26px;background:#3d3d3d"></div>
<div class="t" style="left:1635px;top:162px;font-size:17px;color:#dedede;">100%</div>
<svg class="abs" style="left:1697px;top:166px" width="12" height="9" viewBox="0 0 12 9"><path d="M1.5,2 L6,6.5 L10.5,2" fill="none" stroke="#9a9a9a" stroke-width="1.5"/></svg>
<div class="abs" style="left:1366px;top:190px;width:554px;height:2px;background:#292929"></div>
<!-- lock row -->
<div class="t" style="left:1376px;top:204px;font-size:17px;color:#a6a6a6;">Lock:</div>
<svg class="abs" style="left:1428px;top:205px" width="16" height="16" viewBox="0 0 16 16"><rect x="0" y="0" width="16" height="16" fill="#d4d4d4"/><path d="M2,2h4v4h-4z M10,2h4v4h-4z M6,6h4v4h-4z M2,10h4v4h-4z M10,10h4v4h-4z" fill="#2a2a2a"/></svg>
<svg class="abs" style="left:1456px;top:203px" width="22" height="21" viewBox="0 0 22 21"><path d="M19.2,2.2 L12.2,9.6" stroke="#d4d4d4" stroke-width="3.4" stroke-linecap="round"/><path d="M12.3,11.3 C14.3,14 11.5,19.5 1.8,20.3 C2.5,16 5,11 9.3,10.2Z" fill="#d4d4d4"/></svg>
<svg class="abs" style="left:1487px;top:202px" width="21" height="21" viewBox="0 0 21 21"><path d="M10.5,2 V19 M2,10.5 H19" stroke="#d0d0d0" stroke-width="1.6"/><path d="M10.5,0.5 L14,4.5 H7Z M10.5,20.5 L14,16.5 H7Z M0.5,10.5 L4.5,7 V14Z M20.5,10.5 L16.5,7 V14Z" fill="#d0d0d0"/></svg>
<svg class="abs" style="left:1518px;top:204px" width="22" height="21" viewBox="0 0 22 21"><path d="M4,1 V20 M1,16.5 H21 M4,4.5 H13 L17,8.5 V20" fill="none" stroke="#d0d0d0" stroke-width="1.5"/><path d="M15,1.5 L16.5,3 M19,1 V3.5 M20.5,5 H18" stroke="#d0d0d0" stroke-width="1.2"/></svg>
<svg class="abs" style="left:1551px;top:204px" width="17" height="19" viewBox="0 0 17 19"><path d="M4.5,8 V5.5 A4,4 0 0 1 12.5,5.5 V8" fill="none" stroke="#d0d0d0" stroke-width="2"/><rect x="1.5" y="8" width="14" height="10" rx="1" fill="#d0d0d0"/><circle cx="8.5" cy="13" r="1.6" fill="#323232"/></svg>
<div class="t" style="left:1593px;top:204px;font-size:17px;color:#a6a6a6;">Fill:</div>
<div class="abs" style="left:1628px;top:198px;width:86px;height:28px;background:#242424;border:1px solid #3d3d3d;border-radius:3px;box-sizing:border-box"></div>
<div class="abs" style="left:1693px;top:199px;width:1px;height:26px;background:#3d3d3d"></div>
<div class="t" style="left:1635px;top:204px;font-size:17px;color:#dedede;">100%</div>
<svg class="abs" style="left:1697px;top:208px" width="12" height="9" viewBox="0 0 12 9"><path d="M1.5,2 L6,6.5 L10.5,2" fill="none" stroke="#9a9a9a" stroke-width="1.5"/></svg>

<!-- layers list -->
<div class="abs" style="left:1366px;top:238px;width:532px;height:113px;background:#303030"></div>
<div class="abs" style="left:1407px;top:238px;width:1px;height:55px;background:#2b2b2b"></div>
<div class="abs" style="left:1366px;top:292px;width:42px;height:1px;background:#2b2b2b"></div>
<div class="abs" style="left:1898px;top:238px;width:22px;height:804px;background:#2a2a2a"></div>
<!-- row 1 -->
<svg class="abs" style="left:1377.5px;top:259.5px" width="21" height="15" viewBox="0 0 21 15"><path d="M1,7.5 C5,0.5 16,0.5 20,7.5 C16,14.5 5,14.5 1,7.5Z" fill="#dadada"/><circle cx="10.5" cy="7.5" r="4" fill="#262626"/><circle cx="9.3" cy="6.3" r="1" fill="#9a9a9a"/></svg>
<div class="abs" style="left:1414px;top:243px;width:34px;height:2px;background:#242424"></div>
<svg class="abs" style="left:1415px;top:245px" width="33" height="42" viewBox="-120 -87 825 1050" preserveAspectRatio="none"><rect x="-120" y="-87" width="825" height="1050" fill="#eadfd0"/><use href="#artg"/></svg>
<div class="t" style="left:1463px;top:257.5px;font-size:17.5px;color:#d4d4d4;">boho-7852923</div>
<!-- row 2 selected -->
<div class="abs" style="left:1408px;top:293px;width:490px;height:58px;background:#344b63"></div>
<svg class="abs" style="left:1377.5px;top:317.5px" width="21" height="15" viewBox="0 0 21 15"><path d="M1,7.5 C5,0.5 16,0.5 20,7.5 C16,14.5 5,14.5 1,7.5Z" fill="#dadada"/><circle cx="10.5" cy="7.5" r="4" fill="#262626"/><circle cx="9.3" cy="6.3" r="1" fill="#9a9a9a"/></svg>
<div class="abs" style="left:1415px;top:302px;width:33px;height:43px;background:#fff;border:1px solid #1d2a38;box-sizing:border-box"></div>
<svg class="abs" style="left:1410px;top:296px" width="43" height="53" viewBox="0 0 43 53"><path d="M1.5,14 V1.5 H14 M29,1.5 H41.5 V14 M41.5,39 V51.5 H29 M14,51.5 H1.5 V39" fill="none" stroke="#d8dee6" stroke-width="1.8"/></svg>
<div class="t" style="left:1463px;top:314px;font-size:17px;color:#dfe5ec;">Background</div>

<!-- footer -->
<div class="abs" style="left:1366px;top:1042px;width:554px;height:34px;background:#2e2e2e"></div>
<svg class="abs" style="left:1636px;top:1052px" width="23" height="12" viewBox="0 0 23 12"><path d="M9.5,1.5 H6.5 A4.5,4.5 0 0 0 6.5,10.5 H9.5 M13.5,1.5 H16.5 A4.5,4.5 0 0 1 16.5,10.5 H13.5 M6,6 H17" fill="none" stroke="#8e8e8e" stroke-width="1.8"/></svg>
<div class="t" style="left:1676px;top:1052px;font-size:15px;font-style:italic;font-weight:bold;color:#a0a0a0;">f</div>
<div class="abs" style="left:1829px;top:1064px;width:16px;height:1.5px;background:#9a9a9a"></div>
<div class="abs" style="left:1868px;top:1065px;width:12px;height:1.5px;background:#9a9a9a"></div>
<div class="abs" style="left:1741px;top:1063px;width:40px;height:13px;background:#3a3a3a"></div>
<svg class="abs" style="left:1692px;top:1066px" width="6" height="5" viewBox="0 0 6 5"><path d="M0.3,0.5 H5.7 L3,4.2Z" fill="#d8d8d8"/></svg>
<svg class="abs" style="left:1768.5px;top:1067.5px" width="6" height="5" viewBox="0 0 6 5"><path d="M0.3,0.5 H5.7 L3,4.2Z" fill="#d8d8d8"/></svg>

<!-- dropdown menu -->
<div class="abs" style="left:1682px;top:558px;width:238px;height:505px;background:#f0f0f0;box-shadow:1px 1px 2px rgba(0,0,0,.5)"></div>
<div class="abs" style="left:1682px;top:558px;width:1px;height:505px;background:#9a9a9a"></div>
<div class="abs" style="left:1686px;top:562px;width:232px;height:23.5px;background:#0a78d4"></div>
<div class="t" style="left:1712.5px;top:566.40px;font-size:16.7px;letter-spacing:0.0px;color:#c8ecff;">Solid Color...</div>
<div class="t" style="left:1712.5px;top:590.15px;font-size:16.7px;letter-spacing:0.3px;color:#1e1e1e;">Gradient...</div>
<div class="t" style="left:1712.5px;top:613.90px;font-size:16.7px;letter-spacing:0.3px;color:#1e1e1e;">Pattern...</div>
<div class="t" style="left:1712.5px;top:653.45px;font-size:16.7px;letter-spacing:0.33px;color:#1e1e1e;">Brightness/Contrast...</div>
<div class="t" style="left:1712.5px;top:677.20px;font-size:16.7px;letter-spacing:0.19px;color:#1e1e1e;">Levels...</div>
<div class="t" style="left:1712.5px;top:700.95px;font-size:16.7px;letter-spacing:0.2px;color:#1e1e1e;">Curves...</div>
<div class="t" style="left:1712.5px;top:724.70px;font-size:16.7px;letter-spacing:0.3px;color:#1e1e1e;">Exposure...</div>
<div class="t" style="left:1712.5px;top:764.25px;font-size:16.7px;letter-spacing:0.38px;color:#1e1e1e;">Vibrance...</div>
<div class="t" style="left:1712.5px;top:788.00px;font-size:16.7px;letter-spacing:0.56px;color:#1e1e1e;">Hue/Saturation...</div>
<div class="t" style="left:1712.5px;top:811.75px;font-size:16.7px;letter-spacing:0.07px;color:#1e1e1e;">Color Balance...</div>
<div class="t" style="left:1712.5px;top:835.50px;font-size:16.7px;letter-spacing:0.49px;color:#1e1e1e;">Black &amp; White...</div>
<div class="t" style="left:1712.5px;top:859.25px;font-size:16.7px;letter-spacing:0.56px;color:#1e1e1e;">Photo Filter...</div>
<div class="t" style="left:1712.5px;top:883.00px;font-size:16.7px;letter-spacing:0.17px;color:#1e1e1e;">Channel Mixer...</div>
<div class="t" style="left:1712.5px;top:906.75px;font-size:16.7px;letter-spacing:0.3px;color:#1e1e1e;">Color Lookup...</div>
<div class="t" style="left:1712.5px;top:946.30px;font-size:16.7px;letter-spacing:0.9px;color:#1e1e1e;">Invert</div>
<div class="t" style="left:1712.5px;top:970.05px;font-size:16.7px;letter-spacing:0.25px;color:#1e1e1e;">Posterize...</div>
<div class="t" style="left:1712.5px;top:993.80px;font-size:16.7px;letter-spacing:0.31px;color:#1e1e1e;">Threshold...</div>
<div class="t" style="left:1712.5px;top:1017.55px;font-size:16.7px;letter-spacing:0.18px;color:#1e1e1e;">Gradient Map...</div>
<div class="t" style="left:1712.5px;top:1041.30px;font-size:16.7px;letter-spacing:0.21px;color:#1e1e1e;">Selective Color...</div>
<div class="abs" style="left:1686px;top:641px;width:232px;height:1px;background:#c9c9c9"></div>
<div class="abs" style="left:1686px;top:751px;width:232px;height:1px;background:#c9c9c9"></div>
<div class="abs" style="left:1686px;top:933px;width:232px;height:1px;background:#c9c9c9"></div>

<!-- cursor -->
<svg class="abs" style="left:1750px;top:570px" width="70" height="80" viewBox="1750 570 70 80"><path d="M1764,580.5 L1764.2,636 L1776.5,624.5 L1784.5,640.5 L1794,635.5 L1787.5,621.5 L1805,621 Z" fill="#fff" stroke="#000" stroke-width="2.8" stroke-linejoin="miter"/></svg>
</body>
</html>
